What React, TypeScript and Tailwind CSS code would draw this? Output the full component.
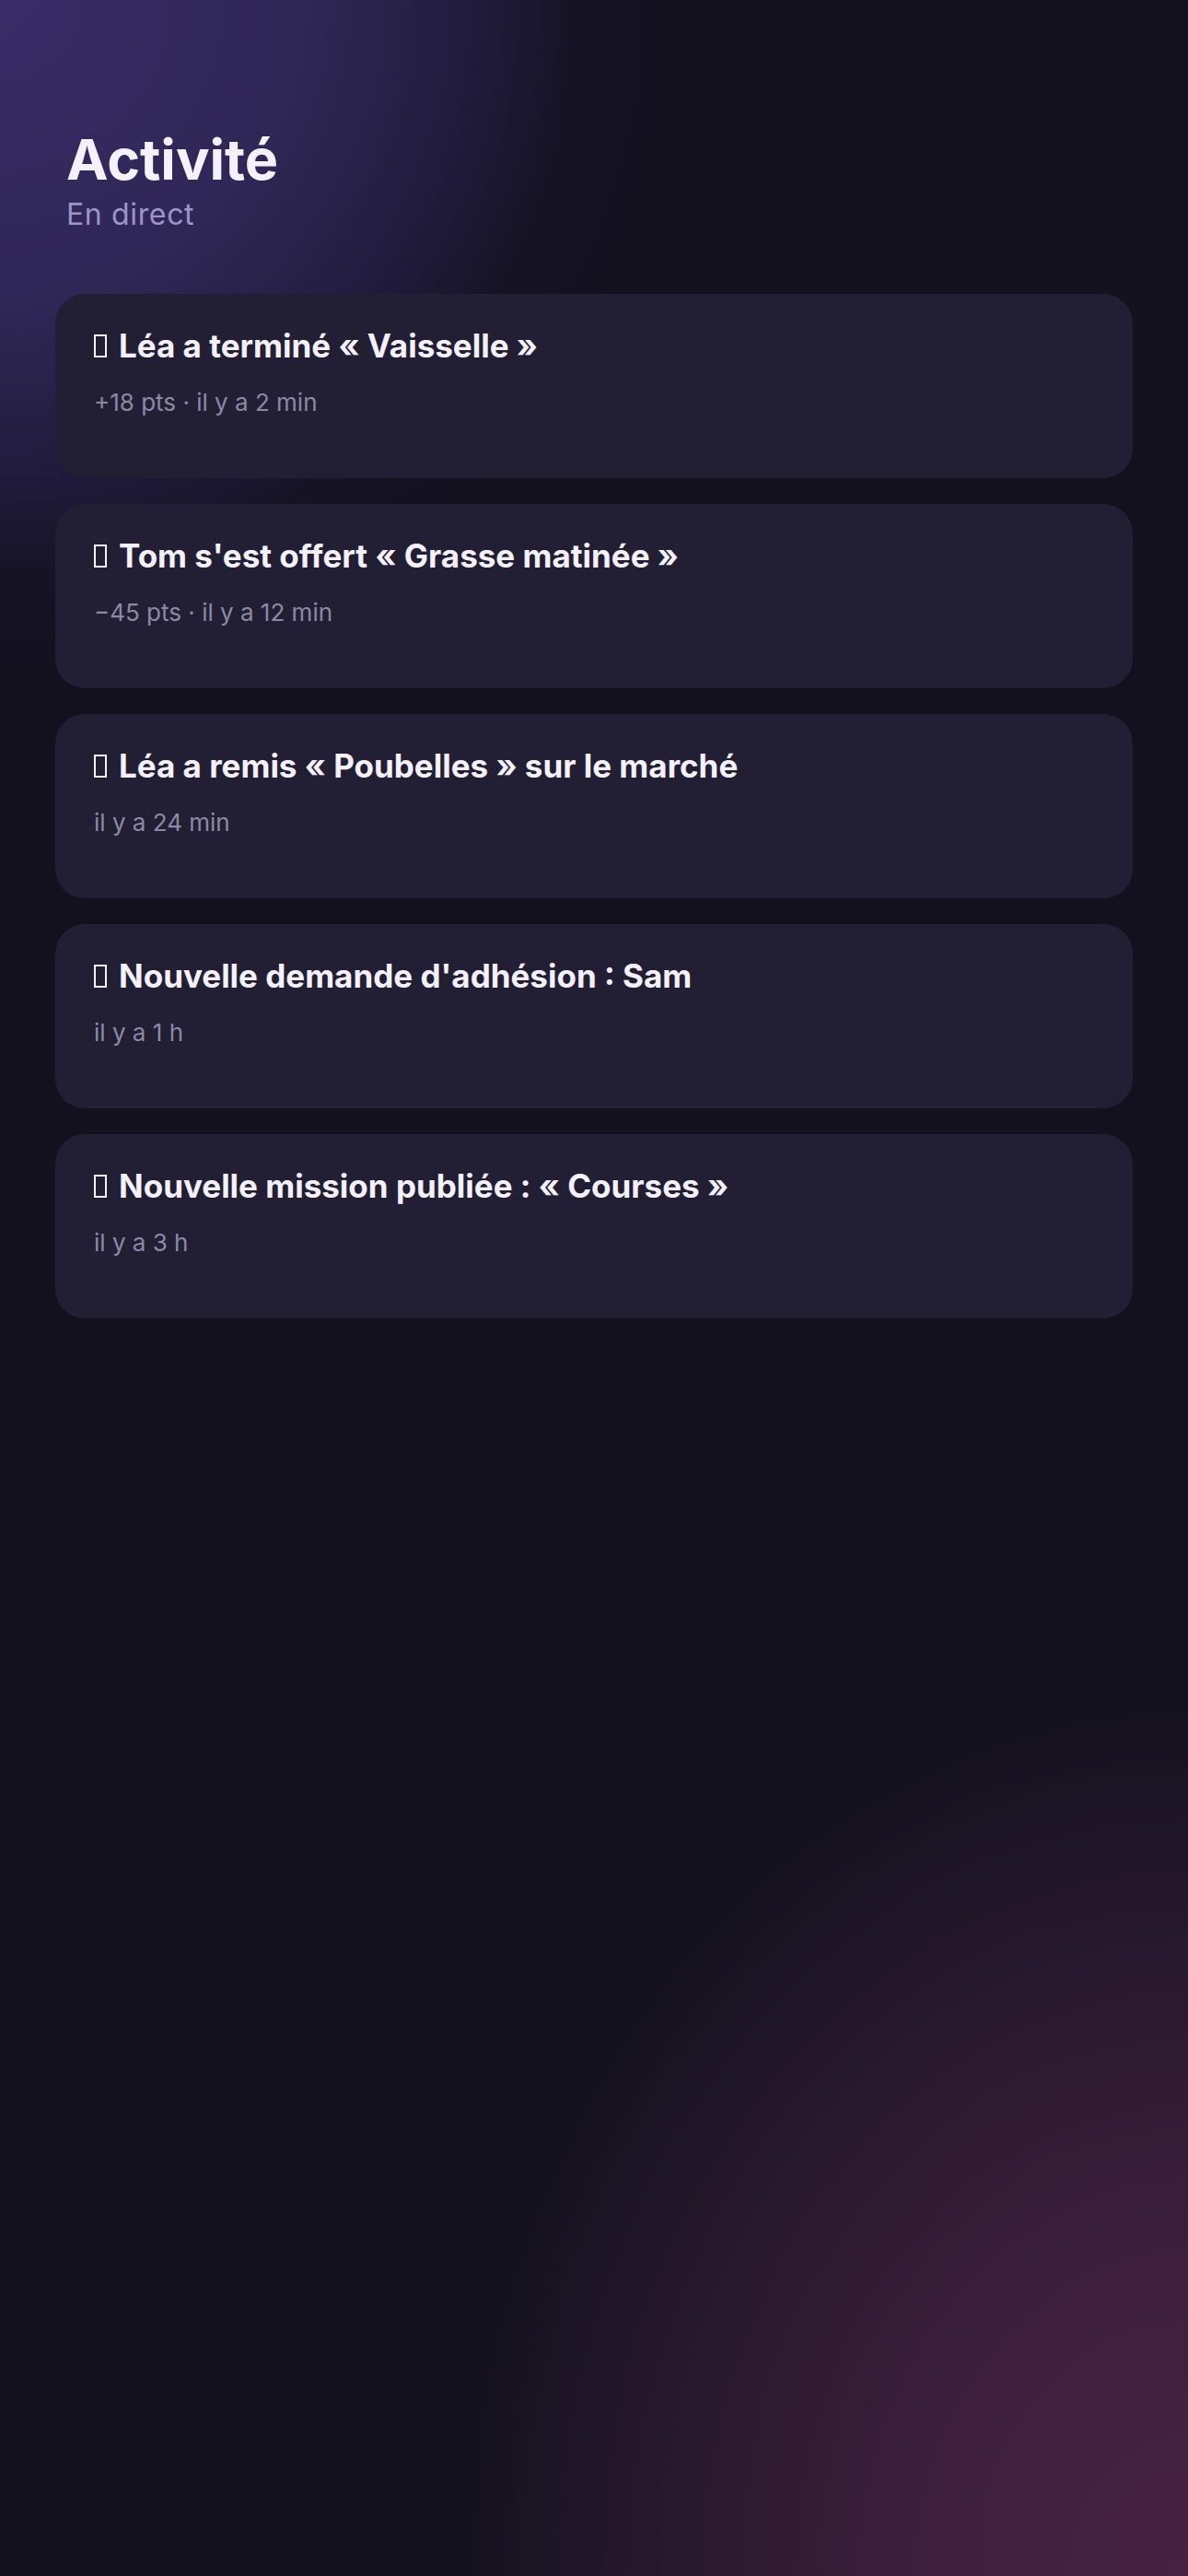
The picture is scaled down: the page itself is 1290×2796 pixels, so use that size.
import React from 'react';

interface ActivityItem {
  title: string;
  meta: string;
}

const items: ActivityItem[] = [
  { title: 'Léa a terminé « Vaisselle »', meta: '+18 pts · il y a 2 min' },
  { title: "Tom s'est offert « Grasse matinée »", meta: '−45 pts · il y a 12 min' },
  { title: 'Léa a remis « Poubelles » sur le marché', meta: 'il y a 24 min' },
  { title: "Nouvelle demande d'adhésion : Sam", meta: 'il y a 1 h' },
  { title: 'Nouvelle mission publiée : « Courses »', meta: 'il y a 3 h' },
];

// the emoji shows as a missing-glyph box in the design
function Tofu() {
  return <span className="inline-block w-[14px] h-[25px] border-[2px] border-[#f4f1fb] mr-[13px] align-baseline" />;
}

function ActivityCard({ item }: { item: ActivityItem }) {
  return (
    <div className="h-[200px] rounded-[32px] bg-[#221f35] px-[42px] pt-[35px]">
      <div className="text-[35px] leading-[1.2] font-bold text-[#f4f1fb]">
        <Tofu />
        {item.title}
      </div>
      <div className="mt-[24px] text-[26px] leading-[1.3] text-[#8d88a5]">
        {item.meta}
      </div>
    </div>
  );
}

export default function App() {
  return (
    <div className="min-h-screen w-full bg-[#13111e] bg-[radial-gradient(circle_740px_at_0%_0%,rgba(56,44,104,1)_0%,rgba(48,40,88,0.95)_45%,rgba(42,34,80,0.65)_68%,rgba(30,25,55,0.25)_85%,transparent_100%),radial-gradient(ellipse_800px_960px_at_100%_100%,rgba(71,34,66,1)_0%,rgba(61,31,60,1)_35%,rgba(43,26,47,0.9)_70%,transparent_100%)] font-['Inter',sans-serif] px-[60px]">
      <div className="pl-[12px] pt-[143px]">
        <h1 className="text-[61px] leading-none font-bold text-[#f4f1fb]">Activité</h1>
        <p className="mt-[13px] text-[32px] leading-none tracking-[0.02em] text-[#9d95c5]">En direct</p>
      </div>
      <div className="mt-[70px] flex flex-col gap-[28px]">
        {items.map((item) => (
          <ActivityCard key={item.title} item={item} />
        ))}
      </div>
    </div>
  );
}
